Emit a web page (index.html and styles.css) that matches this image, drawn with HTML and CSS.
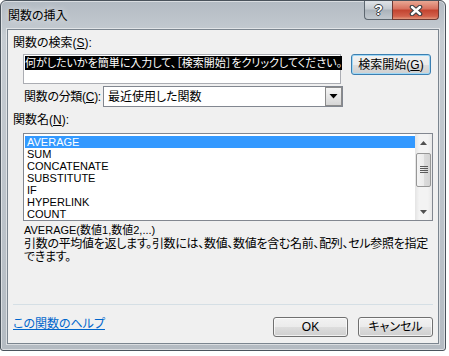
FILE: index.html
```html
<!DOCTYPE html>
<html lang="ja">
<head>
  <meta charset="UTF-8">
  <meta name="viewport" content="width=device-width, initial-scale=1.0">
  <title>関数の挿入</title>
  <link rel="stylesheet" href="styles.css">
</head>
<body>

  <div class="window">
    <div class="titlebar">
      <span class="title">関数の挿入</span>
      <div class="caption-buttons">
        <div class="cap-btn cap-help">?</div>
        <div class="cap-btn cap-close">
          <svg width="14" height="11" viewBox="0 0 14 11">
            <path d="M3 2 L11 9 M11 2 L3 9" stroke="#3a3f44" stroke-width="4.6" stroke-linecap="round"/>
            <path d="M3 2 L11 9 M11 2 L3 9" stroke="#fff" stroke-width="2.4" stroke-linecap="round"/>
          </svg>
        </div>
      </div>
    </div>

    <div class="client">
      <div class="label">関数の検索(<u>S</u>):</div>

      <div class="search-row">
        <div class="search-box">
          <span class="selected">何がしたいかを簡単に入力して、［検索開始］をクリックしてください。</span>
        </div>
        <button class="btn btn-default">検索開始(<u>G</u>)</button>
      </div>

      <div class="category-row">
        <span class="label category-label">関数の分類(<u>C</u>):</span>
        <div class="select">
          <span>最近使用した関数</span>
          <span class="drop">
            <svg width="9" height="5" viewBox="0 0 9 5"><path d="M0.5 0 H8.5 L4.5 4.5 Z" fill="#000"/></svg>
          </span>
        </div>
      </div>

      <div class="label list-label">関数名(<u>N</u>):</div>

      <div class="listbox">
        <ul class="items">
          <li class="active">AVERAGE</li>
          <li>SUM</li>
          <li>CONCATENATE</li>
          <li>SUBSTITUTE</li>
          <li>IF</li>
          <li>HYPERLINK</li>
          <li>COUNT</li>
        </ul>
        <div class="scrollbar">
          <div class="sb-arrow">
            <svg width="7" height="4" viewBox="0 0 7 4"><path d="M3.5 0 L7 4 H0 Z" fill="#505050"/></svg>
          </div>
          <div class="sb-track">
            <div class="sb-thumb">
              <svg width="8" height="8" viewBox="0 0 8 8">
                <path d="M0 0.5 H8 M0 2.5 H8 M0 4.5 H8 M0 6.5 H8" stroke="#5a5a5a" stroke-width="1"/>
              </svg>
            </div>
          </div>
          <div class="sb-arrow">
            <svg width="7" height="4" viewBox="0 0 7 4"><path d="M0 0 H7 L3.5 4 Z" fill="#505050"/></svg>
          </div>
        </div>
      </div>

      <div class="syntax">AVERAGE(数値1,数値2,...)</div>
      <p class="desc">引数の平均値を返します。引数には、数値、数値を含む名前、配列、セル参照を指定<br>できます。</p>

      <div class="spacer"></div>
      <div class="separator"></div>

      <div class="footer">
        <a href="#" class="help-link">この関数のヘルプ</a>
        <div class="footer-buttons">
          <button class="btn">OK</button>
          <button class="btn">キャンセル</button>
        </div>
      </div>
    </div>
  </div>

</body>
</html>
```

FILE: styles.css
```css
/* Insert Function dialog, Windows 7 look */
body {
  margin: 0;
  background-color: #fff;
  font-family: "Liberation Sans", "Noto Sans CJK JP", sans-serif;
  font-size: 12px;
  font-feature-settings: "palt";
  color: #000;
}

.window {
  width: 444px;
  height: 349px;
  border: 1px solid #4a535c;
  border-radius: 6px 6px 3px 3px;
  background: linear-gradient(180deg, #b3bbc3 0%, #c6ccd2 10%, #bcc3ca 60%, #b4bbc2 100%);
  box-shadow: inset 0 0 0 1px rgba(255, 255, 255, 0.5);
  display: flex;
  flex-direction: column;
}

.titlebar {
  height: 28px;
  padding: 0 6px 0 7px;
  display: flex;
  justify-content: space-between;
  align-items: flex-start;
}

.title {
  margin-top: 8px;
  line-height: 14px;
  text-shadow: 0 0 6px rgba(255, 255, 255, 0.9);
}

.caption-buttons {
  display: flex;
}

.cap-btn {
  height: 19px;
  box-sizing: border-box;
  border: 1px solid #5d6770;
  border-top: none;
  display: flex;
  justify-content: center;
  align-items: center;
}

.cap-help {
  width: 28px;
  border-right: none;
  border-radius: 0 0 0 4px;
  background: linear-gradient(180deg, #dfe3e7 0%, #c4cad0 45%, #aab2ba 50%, #c2c9cf 100%);
  color: #fff;
  font-weight: bold;
  font-size: 14px;
  text-shadow: -1px 0 #3a3f44, 1px 0 #3a3f44, 0 -1px #3a3f44, 0 1px #3a3f44;
}

.cap-close {
  width: 47px;
  border-radius: 0 0 4px 0;
  border-color: #6e3a34;
  background: linear-gradient(180deg, #e9a894 0%, #d7705d 45%, #c2432f 50%, #d2614c 85%, #e39a7f 100%);
}

.client {
  flex: 1;
  margin: 0 6px 6px 6px;
  padding: 7px 5px 6px 5px;
  border: 1px solid #7b858f;
  background-color: #f0f0f0;
  box-shadow: 0 0 0 1px rgba(255, 255, 255, 0.5);
  display: flex;
  flex-direction: column;
}

.label {
  line-height: 12px;
  white-space: nowrap;
}

.search-row {
  display: flex;
  align-items: flex-start;
  gap: 10px;
  margin: 5px 0 0 10px;
}

.search-box {
  width: 318px;
  height: 30px;
  box-sizing: border-box;
  border: 1px solid #abadb3;
  background-color: #fff;
  padding: 1px 0 0 1px;
}

.selected {
  display: inline-block;
  background-color: #000;
  color: #fff;
  line-height: 14px;
  font-size: 11px;
  white-space: nowrap;
}

.btn {
  width: 75px;
  height: 20px;
  box-sizing: border-box;
  padding: 0;
  border: 1px solid #707070;
  border-radius: 3px;
  background: linear-gradient(180deg, #f2f2f2 0%, #ebebeb 50%, #dddddd 51%, #cfcfcf 100%);
  box-shadow: inset 0 0 0 1px rgba(255, 255, 255, 0.7);
  font: inherit;
  line-height: 16px;
  color: #000;
}

.btn-default {
  width: 80px;
  height: 21px;
  border-color: #3c7fb1;
  box-shadow: inset 0 0 0 1px #9fd8f6;
}

.category-row {
  display: flex;
  align-items: center;
  gap: 2px;
  margin: 2px 0 0 11px;
}

.category-label {
  letter-spacing: -0.3px;
}

.select {
  width: 240px;
  height: 21px;
  box-sizing: border-box;
  border: 1px solid #828790;
  background-color: #fff;
  padding-left: 4px;
  display: flex;
  justify-content: space-between;
  align-items: center;
  line-height: 14px;
}

.drop {
  width: 17px;
  height: 19px;
  box-sizing: border-box;
  border: 1px solid #8b8b8b;
  background: linear-gradient(180deg, #f5f5f5 0%, #e6e6e6 50%, #d6d6d6 100%);
  display: flex;
  justify-content: center;
  align-items: center;
}

.list-label {
  margin-top: 7px;
}

.listbox {
  width: 410px;
  height: 88px;
  box-sizing: border-box;
  margin: 7px 0 0 10px;
  border: 1px solid #828790;
  background-color: #fff;
  display: flex;
}

.items {
  flex: 1;
  list-style: none;
  margin: 0;
  padding: 2px 0 0 1px;
  font-family: "Liberation Sans", sans-serif;
  font-size: 11px;
}

.items li {
  height: 12px;
  line-height: 12px;
  padding-left: 2px;
}

.items li.active {
  background-color: #3399ff;
  color: #fff;
}

.scrollbar {
  width: 17px;
  display: flex;
  flex-direction: column;
  background: linear-gradient(90deg, #e4e4e4 0%, #f3f3f3 25%, #f3f3f3 75%, #e8e8e8 100%);
}

.sb-arrow {
  height: 17px;
  display: flex;
  justify-content: center;
  align-items: center;
}

.sb-track {
  flex: 1;
}

.sb-thumb {
  width: 15px;
  height: 34px;
  box-sizing: border-box;
  margin: 2px 0 0 1px;
  border: 1px solid #979797;
  border-radius: 2px;
  background: linear-gradient(90deg, #f4f4f4 0%, #ececec 50%, #dcdcdc 51%, #d4d4d4 100%);
  display: flex;
  justify-content: center;
  align-items: center;
}

.syntax {
  margin: 3px 0 0 11px;
  line-height: 12px;
  font-size: 11px;
}

.desc {
  margin: 2px 0 0 11px;
  line-height: 13px;
  letter-spacing: -0.3px;
  white-space: nowrap;
}

.spacer {
  flex: 1;
}

.separator {
  height: 1px;
  background-color: #d5dfe5;
}

.footer {
  display: flex;
  justify-content: space-between;
  align-items: flex-start;
  margin-top: 12px;
}

.help-link {
  margin-top: 1px;
  line-height: 12px;
  color: #0066cc;
}

.footer-buttons {
  display: flex;
  gap: 10px;
}
```
